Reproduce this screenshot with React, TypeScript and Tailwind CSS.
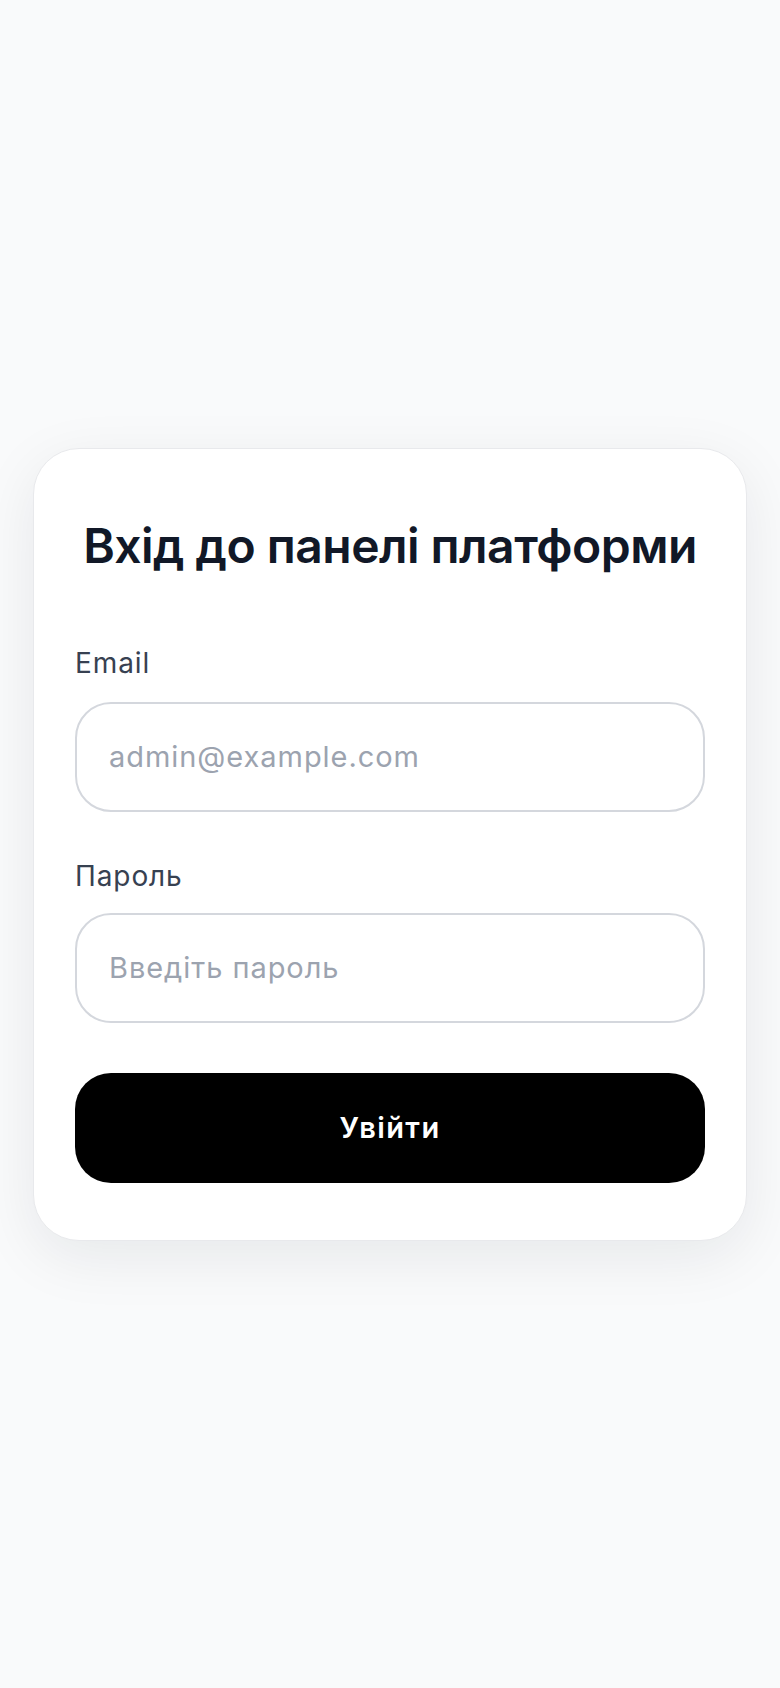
import React from "react";

export default function App() {
  return (
    <div
      className="min-h-screen w-full bg-[#f9fafb] flex items-center justify-center px-[33px]"
      style={{ fontFamily: "Inter, 'Noto Sans', sans-serif" }}
    >
      <div className="w-full rounded-[46px] bg-white border border-[#e8e9ec] shadow-[0_16px_60px_rgba(17,24,39,0.08)] px-[41px] pt-[69px] pb-[57px]">
        <h1 className="text-center text-[48px] leading-[56px] font-semibold tracking-[-0.011em] text-[#111827]">
          Вхід до панелі платформи
        </h1>
        <form className="mt-[69px] flex flex-col" onSubmit={(e) => e.preventDefault()}>
          <label className="text-[28px] leading-[40px] tracking-[0.9px] text-[#374151]">Email</label>
          <input
            type="email"
            placeholder="admin@example.com"
            className="mt-[19px] h-[110px] w-full rounded-[36px] border-2 border-[#d4d7dd] bg-white px-[32px] text-[29px] tracking-[0.95px] text-[#111827] placeholder:text-[#9ca3af] outline-none"
          />
          <label className="mt-[44px] text-[28px] leading-[40px] tracking-[0.9px] text-[#374151]">Пароль</label>
          <input
            type="password"
            placeholder="Введіть пароль"
            className="mt-[17px] h-[110px] w-full rounded-[36px] border-2 border-[#d4d7dd] bg-white px-[32px] text-[29px] tracking-[0.95px] text-[#111827] placeholder:text-[#9ca3af] outline-none"
          />
          <button
            type="submit"
            className="mt-[50px] h-[110px] w-full rounded-[36px] bg-black text-white text-[29px] font-semibold tracking-[1.4px]"
          >
            Увійти
          </button>
        </form>
      </div>
    </div>
  );
}
